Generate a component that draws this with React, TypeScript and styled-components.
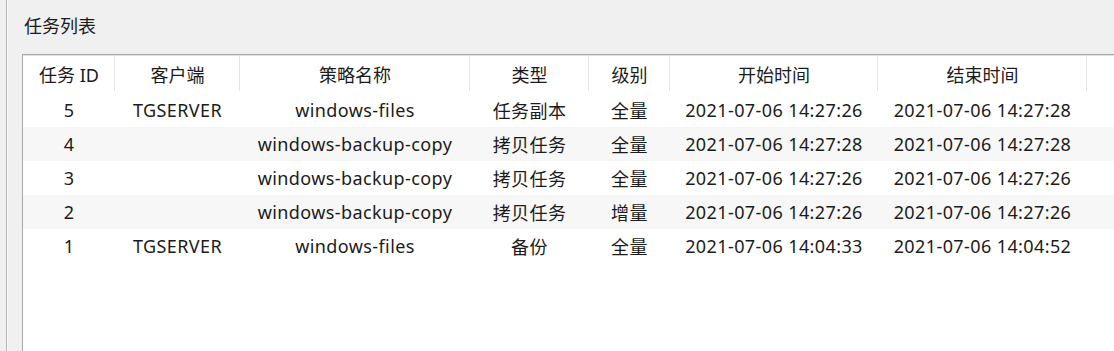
import React from "react";
import styled, { createGlobalStyle } from "styled-components";

interface TaskRow {
  id: number;
  client: string;
  policy: string;
  type: string;
  level: string;
  start: string;
  end: string;
}

const tasks: TaskRow[] = [
  { id: 5, client: "TGSERVER", policy: "windows-files", type: "任务副本", level: "全量", start: "2021-07-06 14:27:26", end: "2021-07-06 14:27:28" },
  { id: 4, client: "", policy: "windows-backup-copy", type: "拷贝任务", level: "全量", start: "2021-07-06 14:27:28", end: "2021-07-06 14:27:28" },
  { id: 3, client: "", policy: "windows-backup-copy", type: "拷贝任务", level: "全量", start: "2021-07-06 14:27:26", end: "2021-07-06 14:27:26" },
  { id: 2, client: "", policy: "windows-backup-copy", type: "拷贝任务", level: "增量", start: "2021-07-06 14:27:26", end: "2021-07-06 14:27:26" },
  { id: 1, client: "TGSERVER", policy: "windows-files", type: "备份", level: "全量", start: "2021-07-06 14:04:33", end: "2021-07-06 14:04:52" },
];

const columns = [
  { title: "任务 ID", width: 92 },
  { title: "客户端", width: 125 },
  { title: "策略名称", width: 230 },
  { title: "类型", width: 119 },
  { title: "级别", width: 81 },
  { title: "开始时间", width: 208 },
  { title: "结束时间", width: 209 },
];

const GlobalStyle = createGlobalStyle`
  html, body {
    margin: 0;
    padding: 0;
    background: #f0f0f0;
  }
  body {
    font-family: "Noto Sans", "Noto Sans CJK SC", sans-serif;
    color: #1b1b1b;
  }
`;

const Page = styled.div`
  width: 1114px;
  height: 351px;
  overflow: hidden;
  background: #f0f0f0;
  padding-left: 6px;
  box-sizing: border-box;
`;

const GroupFrame = styled.div`
  height: 100%;
  border-left: 1px solid #b4b4b4;
  box-shadow: inset 1px 0 0 #fbfbfb;
  padding-left: 15px;
  display: flex;
  flex-direction: column;
`;

const GroupTitle = styled.div`
  font-size: 18px;
  line-height: 24px;
  padding: 14px 0 0 2px;
  height: 54px;
  box-sizing: border-box;
  flex-shrink: 0;
`;

const TableBox = styled.div`
  flex: 1;
  background: #ffffff;
  border-top: 1px solid #a9a9a9;
  border-left: 1px solid #a9a9a9;
  box-shadow: inset 0 1px 0 #e3e3e3;
  overflow: hidden;
`;

const Table = styled.table`
  border-collapse: collapse;
  table-layout: fixed;
  width: 1200px;
  font-size: 18px;
`;

const HeadCell = styled.th`
  position: relative;
  height: 38px;
  padding: 0;
  font-weight: normal;
  text-align: center;
  white-space: nowrap;

  &::after {
    content: "";
    position: absolute;
    right: 0;
    top: 1px;
    bottom: 2px;
    width: 1px;
    background: #e5e5e5;
  }
`;

const FillerHead = styled.th`
  padding: 0;
`;

const BodyRow = styled.tr<{ $striped: boolean }>`
  background: ${({ $striped }) => ($striped ? "#f7f7f7" : "#ffffff")};
`;

const Cell = styled.td`
  height: 34px;
  padding: 0;
  text-align: center;
  white-space: nowrap;
  letter-spacing: 0.4px;
`;

export default function App() {
  return (
    <>
      <GlobalStyle />
      <Page>
        <GroupFrame>
          <GroupTitle>任务列表</GroupTitle>
          <TableBox>
            <Table>
              <colgroup>
                {columns.map((c) => (
                  <col key={c.title} style={{ width: c.width }} />
                ))}
                <col />
              </colgroup>
              <thead>
                <tr>
                  {columns.map((c) => (
                    <HeadCell key={c.title}>{c.title}</HeadCell>
                  ))}
                  <FillerHead />
                </tr>
              </thead>
              <tbody>
                {tasks.map((t, i) => (
                  <BodyRow key={t.id} $striped={i % 2 === 1}>
                    <Cell>{t.id}</Cell>
                    <Cell>{t.client}</Cell>
                    <Cell>{t.policy}</Cell>
                    <Cell>{t.type}</Cell>
                    <Cell>{t.level}</Cell>
                    <Cell>{t.start}</Cell>
                    <Cell>{t.end}</Cell>
                    <Cell />
                  </BodyRow>
                ))}
              </tbody>
            </Table>
          </TableBox>
        </GroupFrame>
      </Page>
    </>
  );
}
